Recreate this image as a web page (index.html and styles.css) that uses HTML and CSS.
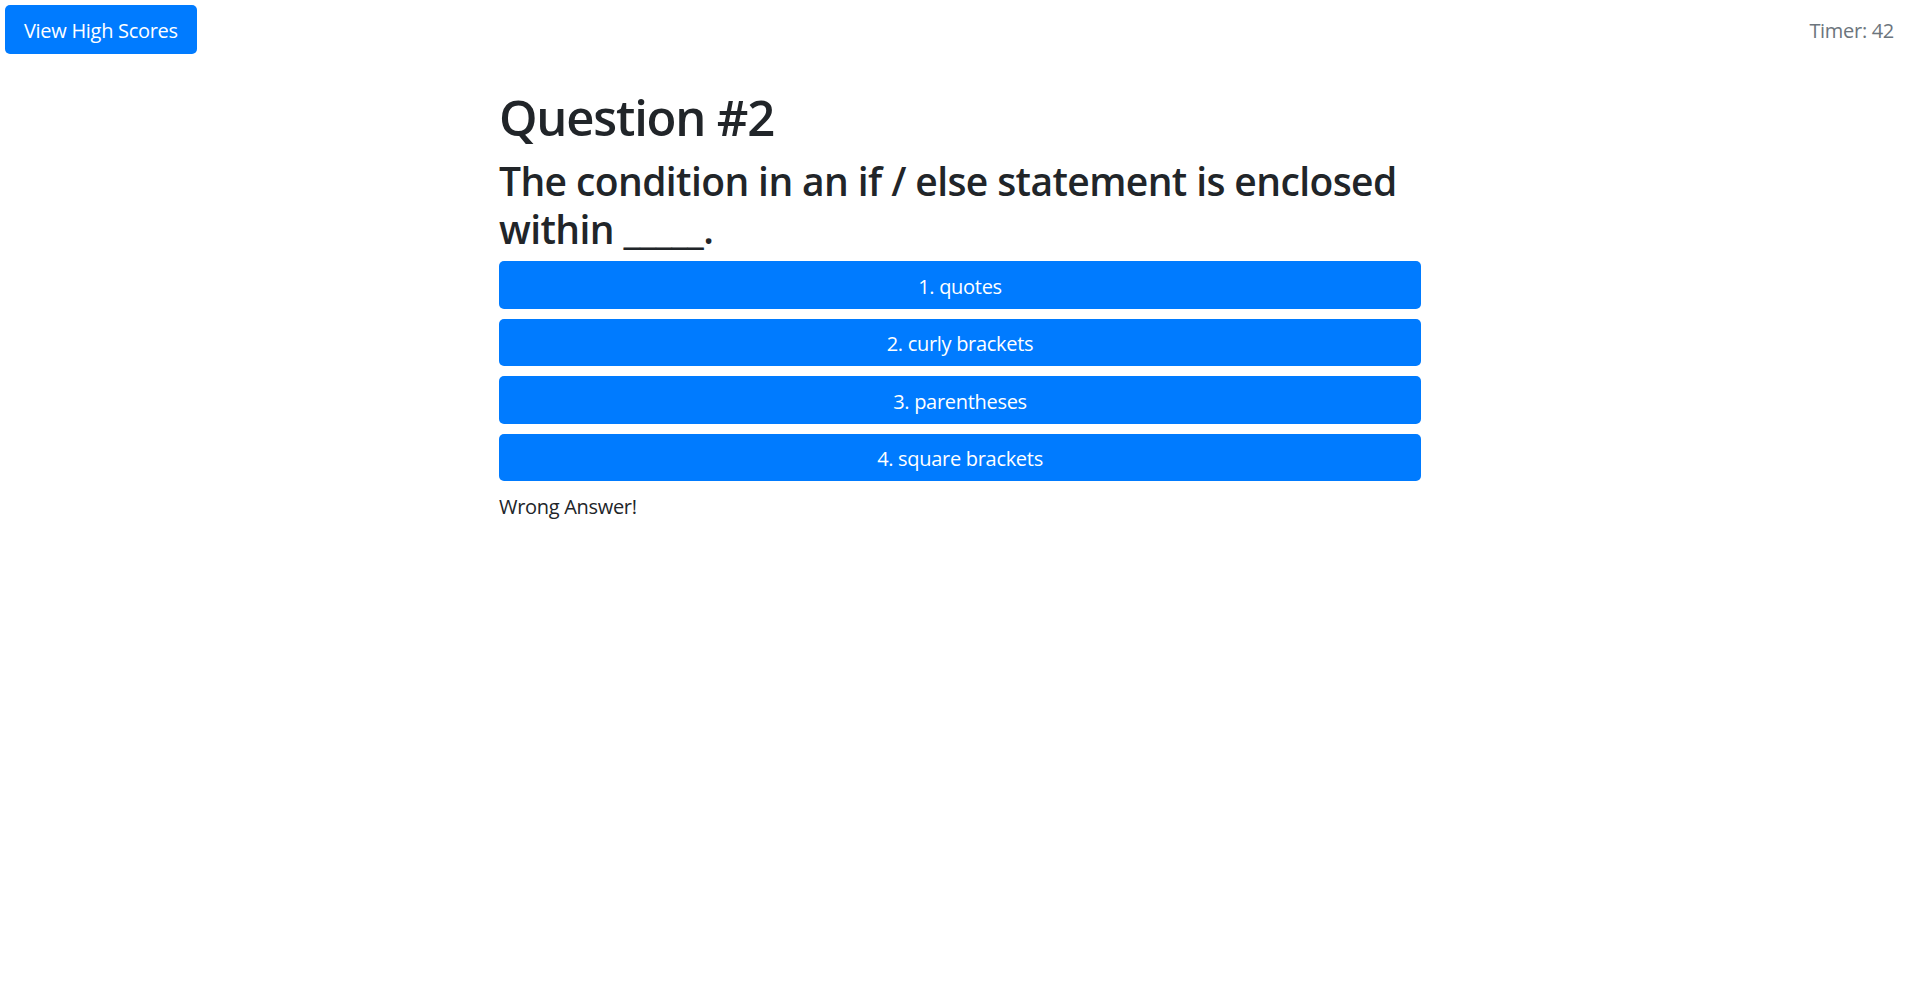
FILE: index.html
```html
<!DOCTYPE html>
<html lang="en">
<head>
<meta charset="utf-8">
<title>Code Quiz</title>
<link rel="stylesheet" href="styles.css">
</head>
<body>
<header class="topbar">
  <button class="btn btn-scores">View High Scores</button>
  <div class="timer">Timer: 42</div>
</header>
<main class="quiz">
  <h1 class="q-number">Question #2</h1>
  <h2 class="q-text">The condition in an if / else statement is enclosed within _____.</h2>
  <div class="answers">
    <button class="btn btn-answer">1. quotes</button>
    <button class="btn btn-answer">2. curly brackets</button>
    <button class="btn btn-answer">3. parentheses</button>
    <button class="btn btn-answer">4. square brackets</button>
  </div>
  <p class="feedback">Wrong Answer!</p>
</main>
</body>
</html>
```

FILE: styles.css
```css
* { box-sizing: border-box; }

html, body {
  margin: 0;
  padding: 0;
  background: #ffffff;
}

body {
  font-family: "Open Sans", "Noto Sans", "Liberation Sans", sans-serif;
  font-size: 20px;
  line-height: 30px;
  color: #212529;
}

.topbar {
  display: flex;
  justify-content: space-between;
  align-items: center;
  height: 59px;
  padding: 0 26px 0 5px;
}

.btn {
  font-family: inherit;
  font-size: 20px;
  line-height: 30px;
  color: #ffffff;
  background: #007bff;
  border: 0;
  border-radius: 5px;
  cursor: pointer;
  letter-spacing: -0.3px;
}

.btn-scores {
  height: 49px;
  padding: 2px 19px 0;
}

.timer {
  color: #6c757d;
  padding-top: 2px;
  letter-spacing: -0.3px;
}

.quiz {
  width: 922px;
  margin: 27.5px auto 0;
}

.q-number {
  margin: 0 0 10px;
  font-size: 49px;
  line-height: 60px;
  font-weight: 600;
  letter-spacing: -1.2px;
}

.q-text {
  margin: 0 0 8.5px;
  font-size: 39px;
  line-height: 48px;
  font-weight: 600;
  letter-spacing: -0.6px;
}

.answers {
  display: flex;
  flex-direction: column;
  gap: 10px;
}

.btn-answer {
  width: 100%;
  padding: 10.5px 15px 7px;
  text-align: center;
}

.feedback {
  margin: 11px 0 0;
  letter-spacing: -0.3px;
}
```
